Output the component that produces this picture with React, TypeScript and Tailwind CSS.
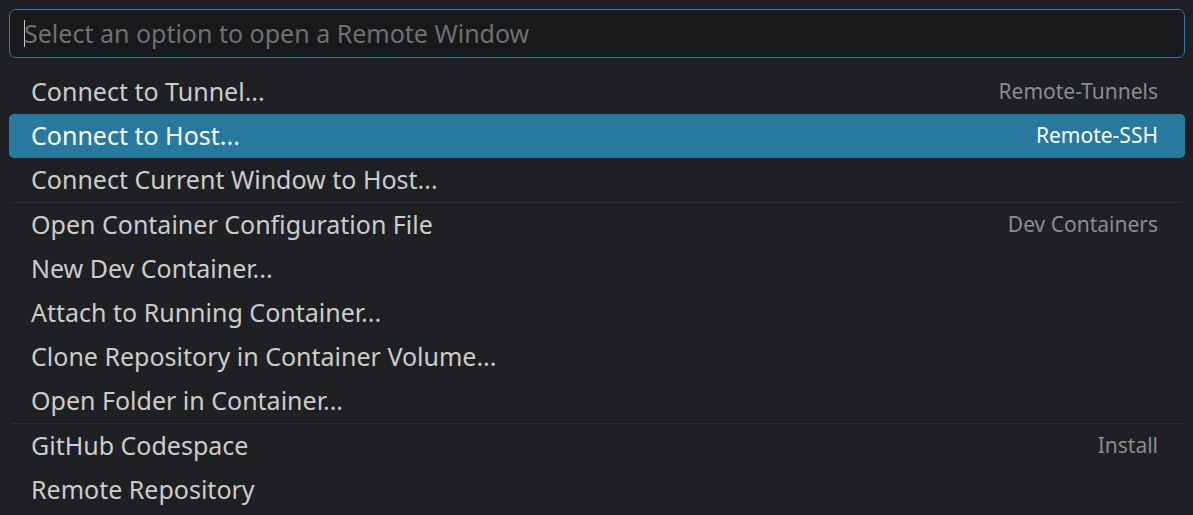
const items: { label: string; desc?: string; active?: boolean; sep?: boolean }[] = [
  { label: "Connect to Tunnel...", desc: "Remote-Tunnels" },
  { label: "Connect to Host...", desc: "Remote-SSH", active: true },
  { label: "Connect Current Window to Host..." },
  { label: "Open Container Configuration File", desc: "Dev Containers", sep: true },
  { label: "New Dev Container..." },
  { label: "Attach to Running Container..." },
  { label: "Clone Repository in Container Volume..." },
  { label: "Open Folder in Container..." },
  { label: "GitHub Codespace", desc: "Install", sep: true },
  { label: "Remote Repository" },
];

export default function App() {
  return (
    <div className="w-[1193px] h-[515px] overflow-hidden bg-[#1f2023] font-['Noto_Sans',sans-serif] text-[#cccccc]">
      <div className="pl-[9px] pr-[8px] pt-[9px]">
        <div className="h-[49px] rounded-[7px] border border-[#2d7ca3] bg-[#18191b] flex items-center pl-[14px]">
          <span className="w-px h-[27px] bg-[#c8c8c8]" />
          <span className="text-[25px] text-[#6f7072] -ml-px">Select an option to open a Remote Window</span>
        </div>
      </div>
      <div className="mt-[12px] pl-[9px] pr-[8px]">
        {items.map((it) => (
          <div key={it.label} className={it.sep ? "border-t border-[#2f3033] mx-[3px]" : ""}>
            <div
              className={
                "h-[44px] flex items-center justify-between pl-[22px] pr-[27px] rounded-[5px] " +
                (it.sep ? "-mx-[3px] " : "") +
                (it.active ? "bg-[#28799f] text-white" : "")
              }
            >
              <span className="text-[25px]">{it.label}</span>
              {it.desc && (
                <span className={"text-[21px] " + (it.active ? "text-white" : "text-[#8c8c8c]")}>{it.desc}</span>
              )}
            </div>
          </div>
        ))}
      </div>
    </div>
  );
}
